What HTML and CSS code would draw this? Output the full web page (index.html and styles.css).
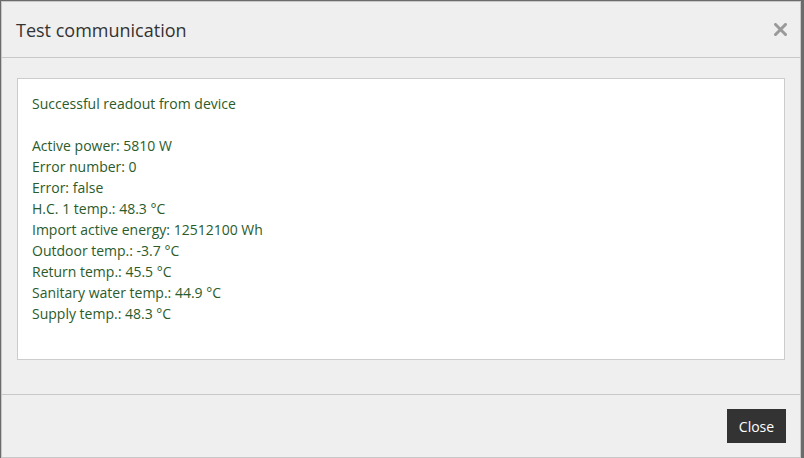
FILE: index.html
```html
<!DOCTYPE html>
<html>
<head>
<meta charset="utf-8">
<link rel="stylesheet" href="styles.css">
</head>
<body>
<div class="backdrop">
  <div class="dialog">
    <div class="dialog-header">
      <h1 class="dialog-title">Test communication</h1>
      <button class="dialog-x" aria-label="Close">
        <svg width="13" height="13" viewBox="0 0 13 13"><path d="M1.5 1.5 L11.5 11.5 M11.5 1.5 L1.5 11.5" stroke="#9a9a9a" stroke-width="3" stroke-linecap="square"/></svg>
      </button>
    </div>
    <div class="dialog-body">
      <div class="readout">
        <div class="line">Successful readout from device</div>
        <div class="line blank">&nbsp;</div>
        <div class="line">Active power: 5810 W</div>
        <div class="line">Error number: 0</div>
        <div class="line">Error: false</div>
        <div class="line">H.C. 1 temp.: 48.3 °C</div>
        <div class="line">Import active energy: 12512100 Wh</div>
        <div class="line">Outdoor temp.: -3.7 °C</div>
        <div class="line">Return temp.: 45.5 °C</div>
        <div class="line">Sanitary water temp.: 44.9 °C</div>
        <div class="line">Supply temp.: 48.3 °C</div>
        <div class="line blank">&nbsp;</div>
      </div>
    </div>
    <div class="dialog-footer">
      <button class="btn-close">Close</button>
    </div>
  </div>
</div>
</body>
</html>
```

FILE: styles.css
```css
* { box-sizing: border-box; }
html, body {
  margin: 0;
  padding: 0;
  width: 804px;
  height: 458px;
  overflow: hidden;
  background: #6b6b6b;
  font-family: "Open Sans", "Liberation Sans", sans-serif;
}
.backdrop {
  padding: 1px 0 0 1px;
}
.dialog {
  width: 800px;
  height: 457px;
  background: #efefef;
  border: 1px solid #c8c8c8;
  display: flex;
  flex-direction: column;
}
.dialog-header {
  height: 56px;
  border-bottom: 1px solid #c8c8c8;
  display: flex;
  align-items: center;
  justify-content: space-between;
  padding: 0 13px 0 14px;
}
.dialog-title {
  margin: 0;
  font-size: 18px;
  font-weight: 400;
  color: #333333;
  line-height: 24px;
}
.dialog-x {
  background: none;
  border: 0;
  padding: 0;
  margin: 0;
  width: 13px;
  height: 13px;
  display: flex;
  cursor: pointer;
}
.dialog-body {
  flex: 0 0 auto;
  padding: 20px 15px 34px 15px;
  border-bottom: 1px solid #c8c8c8;
}
.readout {
  background: #ffffff;
  border: 1px solid #cccccc;
  padding: 14px;
  color: #2b5b2b;
  font-size: 14px;
  line-height: 21px;
}
.line {
  height: 21px;
  white-space: nowrap;
}
.dialog-footer {
  flex: 1;
  display: flex;
  justify-content: flex-end;
  align-items: flex-start;
  padding: 14px 14px 0 0;
}
.btn-close {
  width: 59px;
  height: 34px;
  background: #333333;
  color: #ffffff;
  border: 0;
  border-radius: 0;
  font-family: "Open Sans", "Liberation Sans", sans-serif;
  font-size: 14px;
  padding: 0;
  cursor: pointer;
}
```
